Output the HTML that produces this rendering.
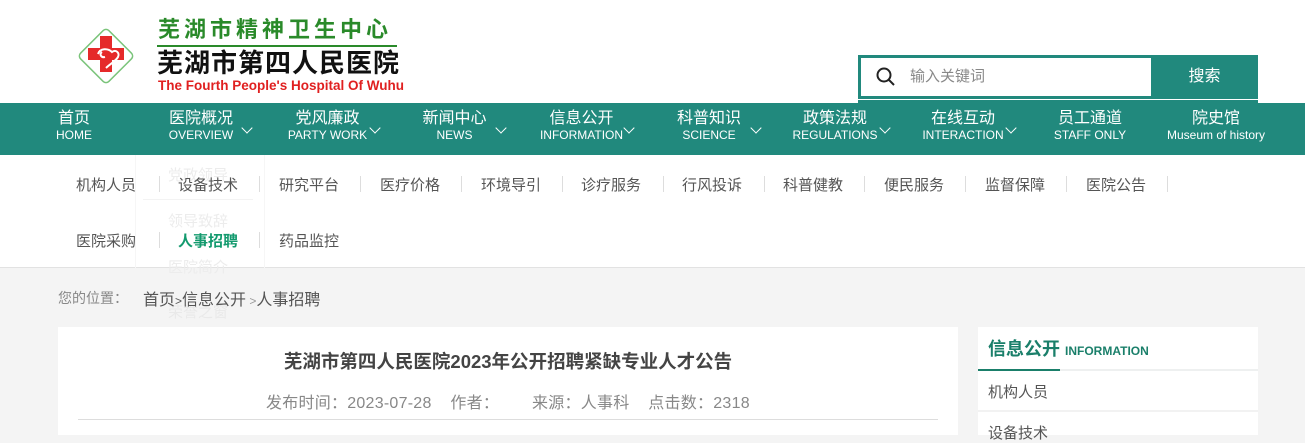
<!DOCTYPE html>
<html><head><meta charset="utf-8"><style>
*{margin:0;padding:0;box-sizing:border-box}
body{width:1305px;height:435px;overflow:hidden;background:#f4f4f4;font-family:"Liberation Sans","Noto Sans CJK SC",sans-serif;position:relative}
.hdr{position:absolute;left:0;top:0;width:1305px;height:103px;background:#fff}
.nav{position:absolute;left:0;top:103px;width:1305px;height:52px;background:#21897d}
.sub{position:absolute;left:0;top:155px;width:1305px;height:113px;background:#fff;border-bottom:1px solid #e2e2e2}
.ni{position:absolute;top:7px;color:#fff;text-align:center;line-height:17px}
.ni .c{font-size:16px}.ni .e{font-size:12px}
.ar{position:absolute;top:124px;width:8px;height:8px;border-right:1.5px solid #fff;border-bottom:1.5px solid #fff;transform:rotate(45deg)}
.s{position:absolute;font-size:15px;color:#555}
.sep{position:absolute;width:1px;height:16px;background:#ddd}
.g{position:absolute;left:168px;font-size:15px;color:#ececec}
.gl{position:absolute;left:143px;width:110px;height:1px;background:#f3f3f3}
</style></head><body>
<div class="hdr">
<svg style="position:absolute;left:72px;top:22px" width="68" height="68" viewBox="0 0 68 68">
<rect x="14" y="14" width="40" height="40" transform="rotate(45 34 34)" fill="#fff" stroke="#7bc47b" stroke-width="1.5" rx="4"/>
<path d="M28 14h12v12h12v12H40v12H28V38H16V26h12z" fill="#e52a2a"/>
<path d="M26 32c2-6 10-6 14-2 4-3 8 1 6 5-2 4-8 7-12 11M30 30c-3 2-1 6 3 5" fill="none" stroke="#fff" stroke-width="2"/>
</svg>
<div style="position:absolute;left:158px;top:15px;font-size:22px;font-weight:bold;color:#2a8a2a;letter-spacing:4px;font-family:'Noto Sans CJK SC',sans-serif;line-height:26px">芜湖市精神卫生中心</div>
<div style="position:absolute;left:157px;top:45px;width:240px;height:2px;background:#2a8a2a"></div>
<div style="position:absolute;left:157px;top:47px;font-size:26px;font-weight:bold;color:#111;letter-spacing:1px;font-family:'Noto Sans CJK SC',sans-serif;line-height:30px">芜湖市第四人民医院</div>
<div style="position:absolute;left:158px;top:78px;font-size:13.5px;color:#e02020;font-weight:bold;line-height:15px">The Fourth People's Hospital Of Wuhu</div>
<div style="position:absolute;left:858px;top:55px;width:400px;height:44px;border:3px solid #21897d;background:#fff"></div>
<div style="position:absolute;left:1151px;top:55px;width:107px;height:44px;background:#21897d;color:#fff;font-size:16px;text-align:center;line-height:44px">搜索</div>
<svg style="position:absolute;left:876px;top:67px" width="20" height="20"><circle cx="8" cy="8" r="6.5" fill="none" stroke="#222" stroke-width="2"/><path d="M13 13l5 5" stroke="#222" stroke-width="2"/></svg>
<div style="position:absolute;left:910px;top:67px;font-size:15px;color:#888;line-height:20px">输入关键词</div>
<div style="position:absolute;left:858px;top:100px;width:400px;height:3px;background:#21897d"></div>
</div>
<div class="nav"></div>
<div class="ni" style="left:44px;width:60px;top:110px"><div class="c">首页</div><div class="e">HOME</div></div>
<div class="ni" style="left:165px;width:72px;top:110px"><div class="c">医院概况</div><div class="e">OVERVIEW</div></div><div class="ar" style="left:243px"></div>
<div class="ni" style="left:285px;width:85px;top:110px"><div class="c">党风廉政</div><div class="e">PARTY WORK</div></div><div class="ar" style="left:371px"></div>
<div class="ni" style="left:418px;width:73px;top:110px"><div class="c">新闻中心</div><div class="e">NEWS</div></div><div class="ar" style="left:497px"></div>
<div class="ni" style="left:535px;width:93px;top:110px"><div class="c">信息公开</div><div class="e">INFORMATION</div></div><div class="ar" style="left:625px"></div>
<div class="ni" style="left:670px;width:78px;top:110px"><div class="c">科普知识</div><div class="e">SCIENCE</div></div><div class="ar" style="left:752px"></div>
<div class="ni" style="left:790px;width:90px;top:110px"><div class="c">政策法规</div><div class="e">REGULATIONS</div></div><div class="ar" style="left:881px"></div>
<div class="ni" style="left:920px;width:86px;top:110px"><div class="c">在线互动</div><div class="e">INTERACTION</div></div><div class="ar" style="left:1007px"></div>
<div class="ni" style="left:1050px;width:80px;top:110px"><div class="c">员工通道</div><div class="e">STAFF ONLY</div></div>
<div class="ni" style="left:1160px;width:112px;top:110px"><div class="c">院史馆</div><div class="e">Museum of history</div></div>
<div class="sub"></div>
<div style="position:absolute;left:135px;top:155px;width:130px;height:113px;border-left:1px solid #f6f6f6;border-right:1px solid #f6f6f6"></div>
<div class="g" style="top:164px">党政领导</div><div class="gl" style="top:199px"></div>
<div class="g" style="top:210px">领导致辞</div>
<div class="g" style="top:256px">医院简介</div>
<div class="g" style="top:301px;color:#e9e9e9">荣誉之窗</div>
<div class="g" style="top:344px;color:#f0f0f0">院容院貌</div>
<div class="g" style="top:387px;color:#f0f0f0">组织结构</div>
<div class="s" style="left:76px;top:174px">机构人员</div><div class="sep" style="left:159px;top:176px"></div>
<div class="s" style="left:178px;top:174px">设备技术</div><div class="sep" style="left:259px;top:176px"></div>
<div class="s" style="left:279px;top:174px">研究平台</div><div class="sep" style="left:360px;top:176px"></div>
<div class="s" style="left:380px;top:174px">医疗价格</div><div class="sep" style="left:461px;top:176px"></div>
<div class="s" style="left:481px;top:174px">环境导引</div><div class="sep" style="left:562px;top:176px"></div>
<div class="s" style="left:581px;top:174px">诊疗服务</div><div class="sep" style="left:663px;top:176px"></div>
<div class="s" style="left:682px;top:174px">行风投诉</div><div class="sep" style="left:764px;top:176px"></div>
<div class="s" style="left:783px;top:174px">科普健教</div><div class="sep" style="left:864px;top:176px"></div>
<div class="s" style="left:884px;top:174px">便民服务</div><div class="sep" style="left:965px;top:176px"></div>
<div class="s" style="left:985px;top:174px">监督保障</div><div class="sep" style="left:1066px;top:176px"></div>
<div class="s" style="left:1086px;top:174px">医院公告</div><div class="sep" style="left:1167px;top:176px"></div>
<div class="s" style="left:76px;top:230px">医院采购</div><div class="sep" style="left:159px;top:232px"></div>
<div class="s" style="left:178px;top:230px;color:#139a6e;font-weight:bold">人事招聘</div><div class="sep" style="left:259px;top:232px"></div>
<div class="s" style="left:279px;top:230px">药品监控</div>
<div style="position:absolute;left:58px;top:288px;font-size:14px;color:#888">您的位置：</div>
<div style="position:absolute;left:143px;top:286px;font-size:16px;color:#555">首页<span style="font-size:12px">&gt;</span>信息公开<span style="font-size:12px;color:#999"> &gt;</span>人事招聘</div>
<div style="position:absolute;left:58px;top:327px;width:900px;height:108px;background:#fff"></div>
<div style="position:absolute;left:0;top:349px;width:1016px;text-align:center;font-size:18.5px;font-weight:bold;color:#444;line-height:26px">芜湖市第四人民医院2023年公开招聘紧缺专业人才公告</div>
<div style="position:absolute;left:266px;top:389px;font-size:16px;color:#888;letter-spacing:0.25px">发布时间：2023-07-28&nbsp;&nbsp;&nbsp;&nbsp;作者：&nbsp;&nbsp;&nbsp;&nbsp;&nbsp;&nbsp;&nbsp;来源：人事科&nbsp;&nbsp;&nbsp;&nbsp;点击数：2318</div>
<div style="position:absolute;left:78px;top:419px;width:860px;height:1px;background:#ddd"></div>
<div style="position:absolute;left:978px;top:327px;width:280px;height:108px;background:#fff"></div>
<div style="position:absolute;left:988px;top:337px;font-size:18px;font-weight:bold;color:#1a7f6a;line-height:24px">信息公开 <span style="font-size:12px">INFORMATION</span></div>
<div style="position:absolute;left:978px;top:369px;width:280px;height:2px;background:#eef0f0"></div>
<div style="position:absolute;left:978px;top:369px;width:82px;height:2px;background:#1a7f6a"></div>
<div style="position:absolute;left:988px;top:381px;font-size:15px;color:#555">机构人员</div>
<div style="position:absolute;left:978px;top:410px;width:280px;height:2px;background:#f2f2f2"></div>
<div style="position:absolute;left:988px;top:422px;font-size:15px;color:#555">设备技术</div>
</body></html>
